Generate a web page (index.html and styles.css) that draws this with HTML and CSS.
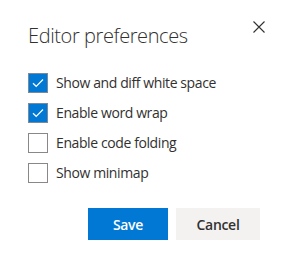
FILE: index.html
```html
<!DOCTYPE html>
<html lang="en">
<head>
  <meta charset="UTF-8">
  <title>Editor preferences</title>
  <link rel="stylesheet" href="styles.css">
</head>
<body>
<div class="dialog">
  <div class="dialog-header">
    <h1 class="dialog-title">Editor preferences</h1>
    <button class="close-btn" aria-label="Close">
      <svg width="12" height="12" viewBox="0 0 12 12">
        <path d="M0.5 0.5 L11.5 11.5 M11.5 0.5 L0.5 11.5" stroke="#323130" stroke-width="1.1" fill="none"/>
      </svg>
    </button>
  </div>
  <div class="options">
    <label class="option">
      <span class="box checked">
        <svg width="12" height="10" viewBox="0 0 12 10"><path d="M1 5.2 L4.2 8.3 L11 1.5" stroke="#fff" stroke-width="1.2" fill="none"/></svg>
      </span>
      Show and diff white space
    </label>
    <label class="option">
      <span class="box checked">
        <svg width="12" height="10" viewBox="0 0 12 10"><path d="M1 5.2 L4.2 8.3 L11 1.5" stroke="#fff" stroke-width="1.2" fill="none"/></svg>
      </span>
      Enable word wrap
    </label>
    <label class="option">
      <span class="box"></span>
      Enable code folding
    </label>
    <label class="option">
      <span class="box"></span>
      Show minimap
    </label>
  </div>
  <div class="actions">
    <button class="btn btn-primary">Save</button>
    <button class="btn btn-default">Cancel</button>
  </div>
</div>
</body>
</html>
```

FILE: styles.css
```css
body {
  margin: 0;
  background: #fff;
  font-family: "Open Sans", "Noto Sans", sans-serif;
  color: #323130;
}
.dialog {
  width: 288px;
  height: 260px;
  padding: 0 28px;
  box-sizing: border-box;
}
.dialog-header {
  display: flex;
  justify-content: space-between;
  align-items: flex-start;
  padding-top: 20px;
}
.dialog-title {
  margin: 0;
  font-size: 20px;
  font-weight: 300;
  line-height: 32px;
  letter-spacing: -0.4px;
}
.close-btn {
  background: none;
  border: none;
  padding: 0;
  margin: 1px -5px 0 0;
  width: 12px;
  height: 12px;
  display: flex;
}
.options {
  margin-top: 21px;
  display: flex;
  flex-direction: column;
  gap: 10px;
}
.option {
  display: flex;
  align-items: center;
  gap: 8px;
  font-size: 14px;
  line-height: 20px;
  height: 20px;
  letter-spacing: -0.4px;
}
.box {
  width: 20px;
  height: 20px;
  box-sizing: border-box;
  border: 1px solid #8a8886;
  display: flex;
  align-items: center;
  justify-content: center;
}
.box.checked {
  background: #0078d4;
  border-color: #7a8a9a;
}
.actions {
  display: flex;
  justify-content: flex-end;
  gap: 8px;
  margin-top: 25px;
}
.btn {
  height: 32px;
  border: none;
  border-radius: 0;
  font-family: "Open Sans", "Noto Sans", sans-serif;
  font-size: 14px;
  font-weight: 600;
  letter-spacing: -0.3px;
  padding: 0;
}
.btn-primary {
  width: 80px;
  background: #0078d4;
  color: #fff;
}
.btn-default {
  width: 84px;
  background: #f3f2f1;
  color: #323130;
}
```
